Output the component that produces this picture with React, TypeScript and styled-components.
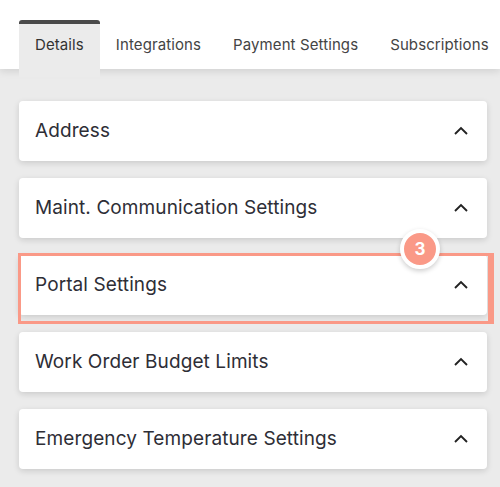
import React from "react";
import styled, { createGlobalStyle } from "styled-components";

const Global = createGlobalStyle`
  html, body { margin: 0; padding: 0; background: #ebebeb; }
  body { font-family: Inter, "Liberation Sans", sans-serif; }
  * { box-sizing: border-box; }
`;

const Header = styled.div`
  height: 69px;
  background: #ffffff;
  box-shadow: 0 2px 8px rgba(0, 0, 0, 0.12);
  padding: 20px 0 0 19px;
  display: flex;
  align-items: flex-start;
  position: relative;
  z-index: 1;
`;

const Tab = styled.div<{ $active?: boolean }>`
  height: ${(p) => (p.$active ? "57px" : "49px")};
  padding: 0 16px;
  display: flex;
  align-items: center;
  padding-bottom: ${(p) => (p.$active ? "12px" : "4px")};
  font-size: 15px;
  letter-spacing: 0.1px;
  color: ${(p) => (p.$active ? "#333" : "#444")};
  background: ${(p) => (p.$active ? "#ebebeb" : "transparent")};
  border-top: 4px solid ${(p) => (p.$active ? "#4a4a4a" : "transparent")};
  border-radius: 3px 3px 0 0;
  white-space: nowrap;
`;

const List = styled.div`
  display: flex;
  flex-direction: column;
  gap: 17px;
  padding: 32px 13px 20px 19px;
`;

const CardWrap = styled.div`
  position: relative;
`;

const Card = styled.div`
  height: 60px;
  background: #fff;
  border-radius: 4px;
  box-shadow: 0 2px 6px rgba(0, 0, 0, 0.14);
  display: flex;
  align-items: center;
  justify-content: space-between;
  padding: 0 18px 1px 16px;
`;

const Title = styled.span`
  font-size: 19px;
  color: #2e2e36;
  letter-spacing: 0.1px;
`;

const Highlight = styled.div`
  position: absolute;
  left: -1px;
  top: -2px;
  right: -7px;
  bottom: -9px;
  border: 3px solid #fa9987;
  border-right-width: 6px;
  pointer-events: none;
`;

const Badge = styled.div`
  position: absolute;
  left: 381px;
  top: -26px;
  width: 40px;
  height: 40px;
  border-radius: 50%;
  background: #fa9987;
  border: 4px solid #fff;
  box-shadow: 0 2px 5px rgba(0, 0, 0, 0.2);
  color: #fff;
  font-size: 17px;
  font-weight: 700;
  display: flex;
  align-items: center;
  justify-content: center;
  z-index: 2;
`;

const Chevron = () => (
  <svg width="16" height="10" viewBox="0 0 16 10">
    <path d="M2 8 L8 2 L14 8" fill="none" stroke="#222" strokeWidth="1.9" />
  </svg>
);

const sections = [
  "Address",
  "Maint. Communication Settings",
  "Portal Settings",
  "Work Order Budget Limits",
  "Emergency Temperature Settings",
];

export default function App() {
  return (
    <>
      <Global />
      <Header>
        <Tab $active>Details</Tab>
        <Tab>Integrations</Tab>
        <Tab>Payment Settings</Tab>
        <Tab>Subscriptions</Tab>
      </Header>
      <List>
        {sections.map((s, i) => (
          <CardWrap key={s}>
            <Card>
              <Title>{s}</Title>
              <Chevron />
            </Card>
            {i === 2 && (
              <>
                <Highlight />
                <Badge>3</Badge>
              </>
            )}
          </CardWrap>
        ))}
      </List>
    </>
  );
}
